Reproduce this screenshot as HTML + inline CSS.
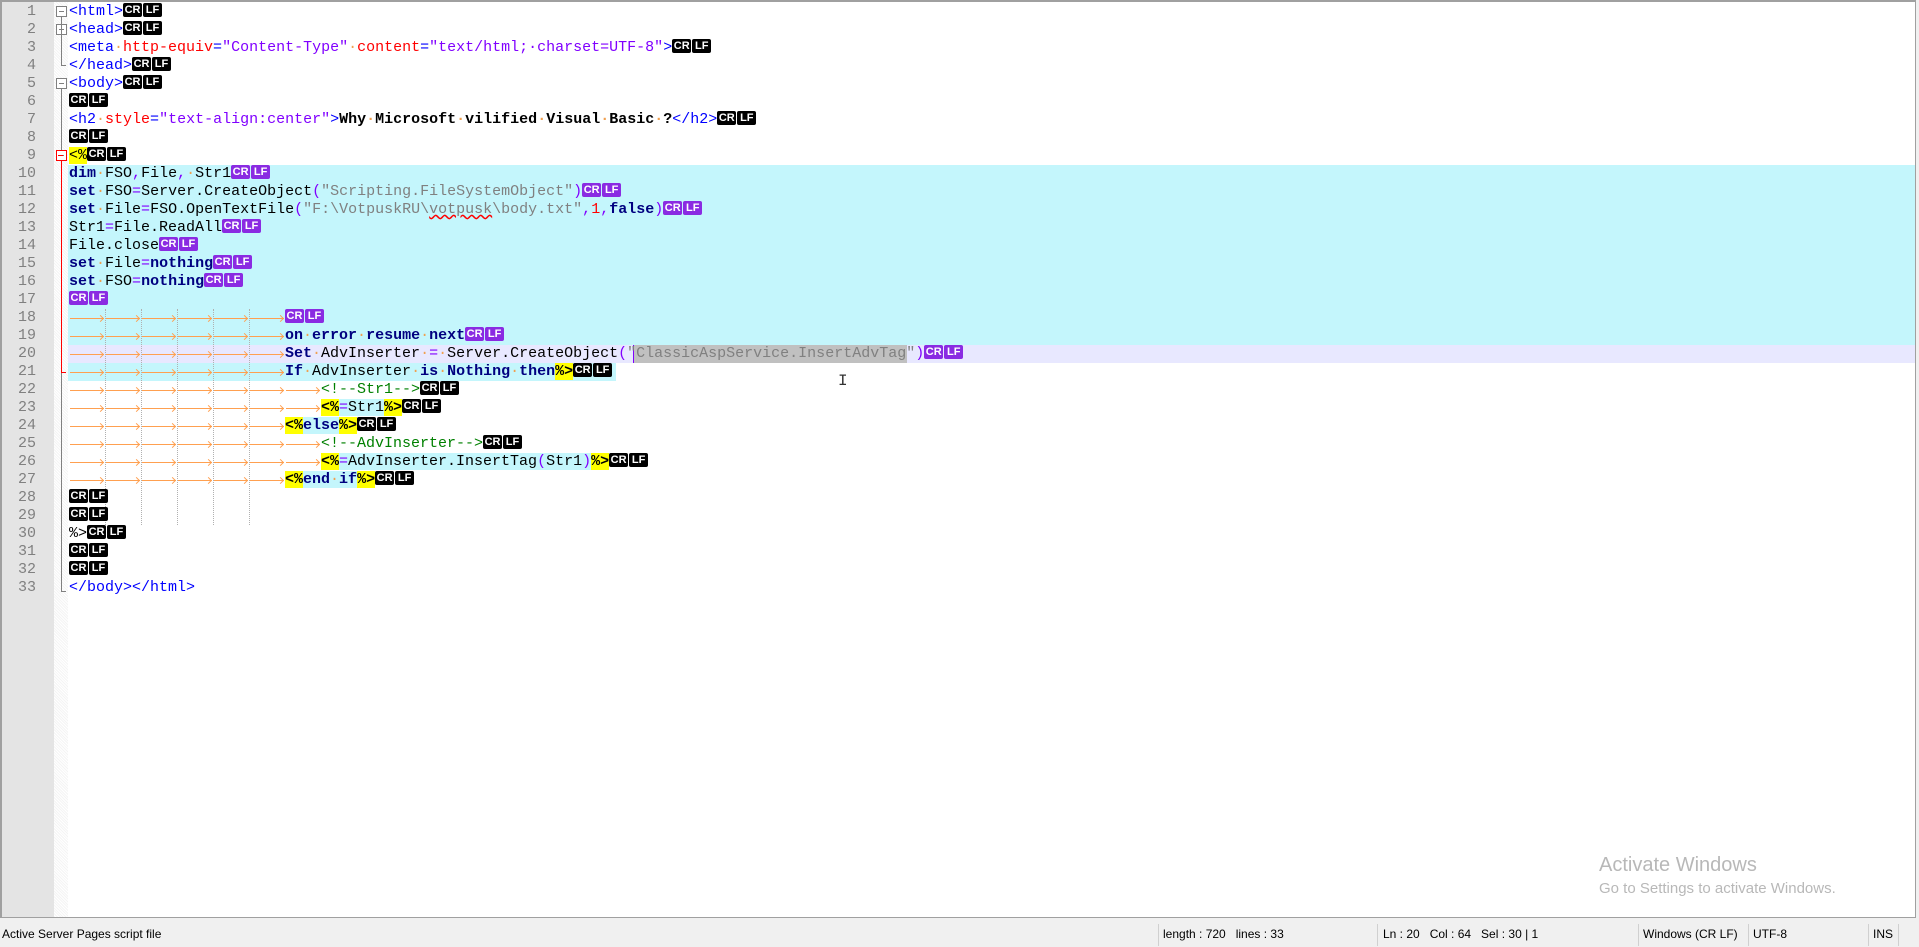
<!DOCTYPE html>
<html><head><meta charset="utf-8"><style>
*{margin:0;padding:0;box-sizing:border-box}
body{width:1919px;height:947px;background:#f0f0f0;position:relative;overflow:hidden;font-family:"Liberation Mono",monospace}
#ed{position:absolute;left:0;top:0;width:1916px;height:918px;background:#fff;border:1px solid #a0a0a0;border-top:2px solid #a0a0a0;border-left:2px solid #a0a0a0;overflow:hidden}
#gut{position:absolute;left:0;top:0;width:52px;height:100%;background:#e4e4e4}
#fold{position:absolute;left:52px;top:0;width:14px;height:100%;background:repeating-linear-gradient(45deg,#f4f4f4 0 1px,#fff 1px 2px)}
.n{position:absolute;left:0;width:34px;text-align:right;font:15px "Liberation Mono",monospace;color:#808080;height:18px;line-height:18px}
.l{position:absolute;left:67px;height:18px;line-height:18px;font-size:15px;white-space:pre;color:#000}
.bg{position:absolute;left:66px;height:18px}
.tg{color:#0000ff}.at{color:#ff0000}.av{color:#8000ff}.b{font-weight:bold}
.k{color:#000080;font-weight:bold}.s{color:#808080}.o{color:#8000ff}.r{color:#ff0000}
.cm{color:#008000}.d{color:#f0a050}
.y{background:#ffff00}.cy{background:#c4f6fc}
.c{display:inline-block;background:#000;color:#fff;font:bold 11px "Liberation Sans",sans-serif;height:14px;line-height:14px;width:19px;text-align:center;border-radius:2px;margin-right:1px;vertical-align:2px}
.p .c{background:#8a2be2}
.t{display:inline-block;width:36px;height:18px;vertical-align:top;position:relative}
.t:before{content:"";position:absolute;left:1px;right:1px;top:9px;height:1px;background:#ffa050}
.t:after{content:"";position:absolute;right:2px;top:7px;width:4px;height:4px;border-top:1px solid #ffa050;border-right:1px solid #ffa050;transform:rotate(45deg)}
.g{position:absolute;width:0;border-left:1px dotted #b0b0b0}
.fb{position:absolute;left:54px;width:11px;height:11px;border:1px solid #808080;background:#fff}
.fb:after{content:"";position:absolute;left:2px;top:4px;width:5px;height:1px;background:#808080}
#sb{position:absolute;left:0;top:922px;width:1919px;height:25px;font:12px "Liberation Sans",sans-serif;color:#000}
#sb span{position:absolute;top:5px}
.sep{position:absolute;top:2px;width:1px;height:22px;background:#d0d0d0}
</style></head><body>
<div id="ed">
<div id="gut"></div><div id="fold"></div>
<div class="bg" style="top:163px;width:1860px;height:180px;background:#c4f6fc"></div>
<div class="bg" style="top:343px;width:1860px;background:#e8e8ff"></div>
<div class="bg" style="top:361px;width:548px;background:#c4f6fc"></div>
<div style="position:absolute;left:632px;top:343px;width:273px;height:18px;background:#c0c0c0"></div>
<div style="position:absolute;left:631px;top:343px;width:1px;height:18px;background:#8000ff"></div>
<div class="g" style="left:103px;top:307px;height:216px"></div>
<div class="g" style="left:139px;top:307px;height:216px"></div>
<div class="g" style="left:175px;top:307px;height:216px"></div>
<div class="g" style="left:211px;top:307px;height:216px"></div>
<div class="g" style="left:247px;top:307px;height:216px"></div>
<div class="fb" style="top:4px"></div>
<div class="fb" style="top:22px"></div>
<div style="position:absolute;left:59px;top:15px;width:1px;height:40px;background:#808080"></div>
<div style="position:absolute;left:59px;top:33px;width:1px;height:30px;background:#808080"></div>
<div style="position:absolute;left:59px;top:63px;width:5px;height:1px;background:#808080"></div>
<div class="fb" style="top:76px"></div>
<div style="position:absolute;left:59px;top:87px;width:1px;height:502px;background:#808080"></div>
<div style="position:absolute;left:59px;top:589px;width:5px;height:1px;background:#808080"></div>
<div style="position:absolute;left:59px;top:157px;width:1px;height:213px;background:#ff0000"></div>
<div style="position:absolute;left:59px;top:370px;width:5px;height:1px;background:#ff0000"></div>
<div class="fb" style="top:148px;border-color:#ff0000"></div>
<div style="position:absolute;left:56px;top:153px;width:5px;height:1px;background:#ff0000"></div>

<div class="n" style="top:1px">1</div><div class="n" style="top:19px">2</div><div class="n" style="top:37px">3</div><div class="n" style="top:55px">4</div><div class="n" style="top:73px">5</div><div class="n" style="top:91px">6</div><div class="n" style="top:109px">7</div><div class="n" style="top:127px">8</div><div class="n" style="top:145px">9</div><div class="n" style="top:163px">10</div><div class="n" style="top:181px">11</div><div class="n" style="top:199px">12</div><div class="n" style="top:217px">13</div><div class="n" style="top:235px">14</div><div class="n" style="top:253px">15</div><div class="n" style="top:271px">16</div><div class="n" style="top:289px">17</div><div class="n" style="top:307px">18</div><div class="n" style="top:325px">19</div><div class="n" style="top:343px">20</div><div class="n" style="top:361px">21</div><div class="n" style="top:379px">22</div><div class="n" style="top:397px">23</div><div class="n" style="top:415px">24</div><div class="n" style="top:433px">25</div><div class="n" style="top:451px">26</div><div class="n" style="top:469px">27</div><div class="n" style="top:487px">28</div><div class="n" style="top:505px">29</div><div class="n" style="top:523px">30</div><div class="n" style="top:541px">31</div><div class="n" style="top:559px">32</div><div class="n" style="top:577px">33</div>

<div class="l" style="top:1px"><span class="tg">&lt;html&gt;</span><span class="c">CR</span><span class="c">LF</span></div>
<div class="l" style="top:19px"><span class="tg">&lt;head&gt;</span><span class="c">CR</span><span class="c">LF</span></div>
<div class="l" style="top:37px"><span class="tg">&lt;meta</span><span class="d">·</span><span class="at">http-equiv</span><span class="tg">=</span><span class="av">"Content-Type"</span><span class="d">·</span><span class="at">content</span><span class="tg">=</span><span class="av">"text/html;·charset=UTF-8"</span><span class="tg">&gt;</span><span class="c">CR</span><span class="c">LF</span></div>
<div class="l" style="top:55px"><span class="tg">&lt;/head&gt;</span><span class="c">CR</span><span class="c">LF</span></div>
<div class="l" style="top:73px"><span class="tg">&lt;body&gt;</span><span class="c">CR</span><span class="c">LF</span></div>
<div class="l" style="top:91px"><span class="c">CR</span><span class="c">LF</span></div>
<div class="l" style="top:109px"><span class="tg">&lt;h2</span><span class="d">·</span><span class="at">style</span><span class="tg">=</span><span class="av">"text-align:center"</span><span class="tg">&gt;</span><span class="b">Why<span class="d">·</span>Microsoft<span class="d">·</span>vilified<span class="d">·</span>Visual<span class="d">·</span>Basic<span class="d">·</span>?</span><span class="tg">&lt;/h2&gt;</span><span class="c">CR</span><span class="c">LF</span></div>
<div class="l" style="top:127px"><span class="c">CR</span><span class="c">LF</span></div>
<div class="l" style="top:145px"><span class="y">&lt;%</span><span class="c">CR</span><span class="c">LF</span></div>
<div class="l p" style="top:163px"><span class="k">dim</span><span class="d">·</span>FSO<span class="o">,</span>File<span class="o">,</span><span class="d">·</span>Str1<span class="c">CR</span><span class="c">LF</span></div>
<div class="l p" style="top:181px"><span class="k">set</span><span class="d">·</span>FSO<span class="o">=</span>Server.CreateObject<span class="o">(</span><span class="s">"Scripting.FileSystemObject"</span><span class="o">)</span><span class="c">CR</span><span class="c">LF</span></div>
<div class="l p" style="top:199px"><span class="k">set</span><span class="d">·</span>File<span class="o">=</span>FSO.OpenTextFile<span class="o">(</span><span class="s">"F:\VotpuskRU\<span style="text-decoration:underline wavy #ff0000">votpusk</span>\body.txt"</span><span class="o">,</span><span class="r">1</span><span class="o">,</span><span class="k">false</span><span class="o">)</span><span class="c">CR</span><span class="c">LF</span></div>
<div class="l p" style="top:217px">Str1<span class="o">=</span>File.ReadAll<span class="c">CR</span><span class="c">LF</span></div>
<div class="l p" style="top:235px">File.close<span class="c">CR</span><span class="c">LF</span></div>
<div class="l p" style="top:253px"><span class="k">set</span><span class="d">·</span>File<span class="o">=</span><span class="k">nothing</span><span class="c">CR</span><span class="c">LF</span></div>
<div class="l p" style="top:271px"><span class="k">set</span><span class="d">·</span>FSO<span class="o">=</span><span class="k">nothing</span><span class="c">CR</span><span class="c">LF</span></div>
<div class="l p" style="top:289px"><span class="c">CR</span><span class="c">LF</span></div>
<div class="l p" style="top:307px"><span class="t"></span><span class="t"></span><span class="t"></span><span class="t"></span><span class="t"></span><span class="t"></span><span class="c">CR</span><span class="c">LF</span></div>
<div class="l p" style="top:325px"><span class="t"></span><span class="t"></span><span class="t"></span><span class="t"></span><span class="t"></span><span class="t"></span><span class="k">on</span><span class="d">·</span><span class="k">error</span><span class="d">·</span><span class="k">resume</span><span class="d">·</span><span class="k">next</span><span class="c">CR</span><span class="c">LF</span></div>
<div class="l p" style="top:343px"><span class="t"></span><span class="t"></span><span class="t"></span><span class="t"></span><span class="t"></span><span class="t"></span><span class="k">Set</span><span class="d">·</span>AdvInserter<span class="d">·</span><span class="o">=</span><span class="d">·</span>Server.CreateObject<span class="o">(</span><span class="s">"ClassicAspService.InsertAdvTag"</span><span class="o">)</span><span class="c">CR</span><span class="c">LF</span></div>
<div class="l" style="top:361px"><span class="t"></span><span class="t"></span><span class="t"></span><span class="t"></span><span class="t"></span><span class="t"></span><span class="k">If</span><span class="d">·</span>AdvInserter<span class="d">·</span><span class="k">is</span><span class="d">·</span><span class="k">Nothing</span><span class="d">·</span><span class="k">then</span><span class="y b">%&gt;</span><span class="c">CR</span><span class="c">LF</span></div>
<div class="l" style="top:379px"><span class="t"></span><span class="t"></span><span class="t"></span><span class="t"></span><span class="t"></span><span class="t"></span><span class="t"></span><span class="cm">&lt;!--Str1--&gt;</span><span class="c">CR</span><span class="c">LF</span></div>
<div class="l" style="top:397px"><span class="t"></span><span class="t"></span><span class="t"></span><span class="t"></span><span class="t"></span><span class="t"></span><span class="t"></span><span class="y b">&lt;%</span><span class="cy"><span class="o">=</span>Str1</span><span class="y b">%&gt;</span><span class="c">CR</span><span class="c">LF</span></div>
<div class="l" style="top:415px"><span class="t"></span><span class="t"></span><span class="t"></span><span class="t"></span><span class="t"></span><span class="t"></span><span class="y b">&lt;%</span><span class="cy k">else</span><span class="y b">%&gt;</span><span class="c">CR</span><span class="c">LF</span></div>
<div class="l" style="top:433px"><span class="t"></span><span class="t"></span><span class="t"></span><span class="t"></span><span class="t"></span><span class="t"></span><span class="t"></span><span class="cm">&lt;!--AdvInserter--&gt;</span><span class="c">CR</span><span class="c">LF</span></div>
<div class="l" style="top:451px"><span class="t"></span><span class="t"></span><span class="t"></span><span class="t"></span><span class="t"></span><span class="t"></span><span class="t"></span><span class="y b">&lt;%</span><span class="cy"><span class="o">=</span>AdvInserter.InsertTag<span class="o">(</span>Str1<span class="o">)</span></span><span class="y b">%&gt;</span><span class="c">CR</span><span class="c">LF</span></div>
<div class="l" style="top:469px"><span class="t"></span><span class="t"></span><span class="t"></span><span class="t"></span><span class="t"></span><span class="t"></span><span class="y b">&lt;%</span><span class="cy"><span class="k">end</span><span class="d">·</span><span class="k">if</span></span><span class="y b">%&gt;</span><span class="c">CR</span><span class="c">LF</span></div>
<div class="l" style="top:487px"><span class="c">CR</span><span class="c">LF</span></div>
<div class="l" style="top:505px"><span class="c">CR</span><span class="c">LF</span></div>
<div class="l" style="top:523px">%&gt;<span class="c">CR</span><span class="c">LF</span></div>
<div class="l" style="top:541px"><span class="c">CR</span><span class="c">LF</span></div>
<div class="l" style="top:559px"><span class="c">CR</span><span class="c">LF</span></div>
<div class="l" style="top:577px"><span class="tg">&lt;/body&gt;&lt;/html&gt;</span></div>
<div style="position:absolute;left:836px;top:370px;font:16px 'Liberation Mono';color:#333">I</div>
<div style="position:absolute;left:1597px;top:852px;font:20px 'Liberation Sans',sans-serif;color:#b8b8b8">Activate Windows</div>
<div style="position:absolute;left:1597px;top:878px;font:15px 'Liberation Sans',sans-serif;color:#b8b8b8">Go to Settings to activate Windows.</div>
</div>
<div id="sb">
<span style="left:2px">Active Server Pages script file</span>
<div class="sep" style="left:1158px"></div><span style="left:1163px">length : 720&nbsp;&nbsp;&nbsp;lines : 33</span>
<div class="sep" style="left:1377px"></div><span style="left:1383px">Ln : 20&nbsp;&nbsp;&nbsp;Col : 64&nbsp;&nbsp;&nbsp;Sel : 30 | 1</span>
<div class="sep" style="left:1638px"></div><span style="left:1643px">Windows (CR LF)</span>
<div class="sep" style="left:1748px"></div><span style="left:1753px">UTF-8</span>
<div class="sep" style="left:1868px"></div><span style="left:1873px">INS</span>
<div class="sep" style="left:1898px"></div>
</div>
</body></html>
